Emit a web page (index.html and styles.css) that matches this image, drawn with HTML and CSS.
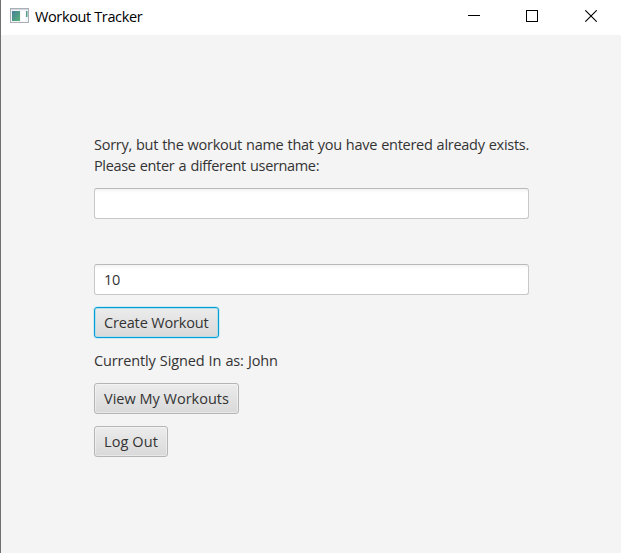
FILE: index.html
```html
<!DOCTYPE html>
<html lang="en">
<head>
<meta charset="utf-8">
<title>Workout Tracker</title>
<link rel="stylesheet" href="styles.css">
</head>
<body>
<div class="window">
  <header class="titlebar">
    <svg class="app-icon" width="19" height="16" viewBox="0 0 19 16">
      <defs>
        <linearGradient id="pane" x1="0" y1="0" x2="1" y2="1">
          <stop offset="0" stop-color="#4a7d9c"/>
          <stop offset="1" stop-color="#55b374"/>
        </linearGradient>
      </defs>
      <rect x=".5" y=".5" width="18" height="14" fill="#f4f6f8" stroke="#a9b0b8"/>
      <rect x="1" y="1" width="17" height="1" fill="#d3d8de"/>
      <rect x="2" y="3" width="8" height="10" fill="url(#pane)"/>
      <rect x="11" y="3" width="4" height="10" fill="#fff"/>
      <rect x="16" y="3" width="1.5" height="6" fill="#559f8c"/>
    </svg>
    <h1 class="title">Workout Tracker</h1>
    <div class="controls">
      <svg width="12" height="12" viewBox="0 0 12 12"><path d="M0 5.5H12" stroke="#000"/></svg>
      <svg width="12" height="12" viewBox="0 0 12 12"><rect x=".5" y=".5" width="11" height="11" fill="none" stroke="#000"/></svg>
      <svg class="close" width="12" height="12" viewBox="0 0 12 12"><path d="M.3.3 11.7 11.7M11.7.3.3 11.7" stroke="#000" stroke-width="1.1"/></svg>
    </div>
  </header>
  <main class="form">
    <p class="label"><span class="line-one">Sorry, but the workout name that you have entered already exists.</span><br><span class="line-two">Please enter a different username:</span></p>
    <input class="field" type="text" value="" aria-label="Workout name">
    <p class="label status"></p>
    <input class="field" type="text" value="10" aria-label="Amount">
    <button class="button create">Create Workout</button>
    <p class="label"><span class="signed-in">Currently Signed In as: John</span></p>
    <button class="button view">View My Workouts</button>
    <button class="button logout">Log Out</button>
  </main>
</div>
</body>
</html>
```
FILE: styles.css
```css
* { box-sizing: border-box; }
body {
  margin: 0;
  overflow: hidden;
  font: 14.5px/21px "Open Sans", "Noto Sans", sans-serif;
  color: #333;
}
.window {
  height: 553px;
  border-left: 1px solid #707070;
  background: #f4f4f4;
}
.titlebar {
  display: flex;
  align-items: center;
  height: 35px;
  padding: 0 24px 3px 9px;
  background: #fff;
}
.app-icon { margin-right: 6px; }
.title {
  margin: 0;
  padding-top: 1px;
  font-size: 14.5px;
  font-weight: 400;
  letter-spacing: -0.37px;
  color: #000;
  white-space: nowrap;
}
.controls { display: flex; gap: 46px; margin-left: auto; }
.controls svg { display: block; }
.controls .close { margin-left: 1px; }
.form {
  display: flex;
  flex-direction: column;
  align-items: flex-start;
  gap: 12px;
  width: 435px;
  margin: 99px 0 0 93px;
}
.label { margin: 0; min-height: 21px; white-space: nowrap; }
.line-one { letter-spacing: -0.27px; word-spacing: 0.55px; }
.line-two { letter-spacing: -0.35px; word-spacing: 0.8px; }
.signed-in { letter-spacing: -0.15px; word-spacing: 0.6px; }
.field {
  width: 435px;
  height: 31px;
  padding: 0 9px;
  border: 1px solid #c8c8c8;
  border-top-color: #b9b9b9;
  border-radius: 3px;
  background: linear-gradient(#f3f3f3, #fff 4px);
  font: inherit;
  letter-spacing: -0.2px;
  color: #333;
  outline: none;
}
.button {
  height: 31px;
  padding: 0 0 0 9px;
  border: 1px solid #b5b5b5;
  border-radius: 3px;
  background: linear-gradient(#ececec, #d9d9d9);
  box-shadow: inset 0 0 0 1px rgba(255, 255, 255, 0.4);
  font: inherit;
  color: #333;
  text-align: left;
  white-space: nowrap;
}
.create {
  width: 125px;
  border-color: #039ed3;
  box-shadow: 0 0 0 1px #cdebf5, inset 0 0 0 1px #b5dce9;
  letter-spacing: -0.16px;
}
.view { width: 145px; letter-spacing: 0; }
.logout { width: 74px; letter-spacing: 0.1px; }
```
